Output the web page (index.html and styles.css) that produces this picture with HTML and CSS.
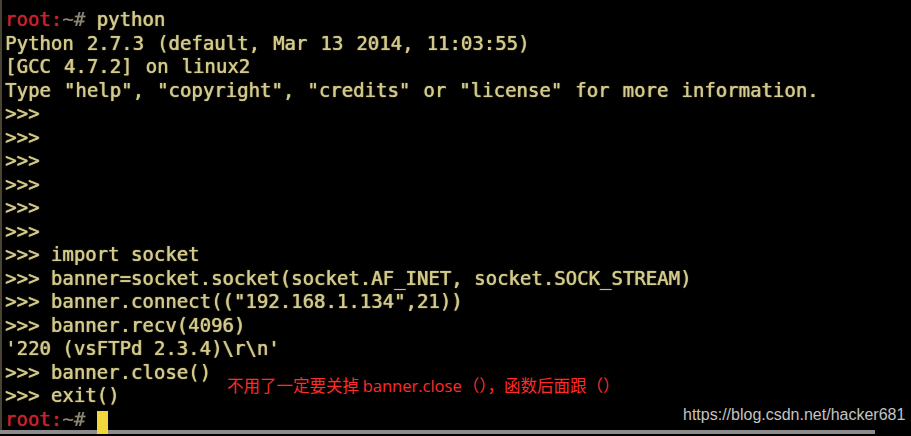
FILE: index.html
```html
<!DOCTYPE html>
<html lang="zh-CN">
<head>
<meta charset="utf-8">
<title>python socket</title>
<link rel="stylesheet" href="styles.css">
</head>
<body>
<div class="shot">
  <div class="term">
    <div class="line"><span class="root">root:</span><span class="dim">~#</span> python</div>
    <div class="line wide">Python 2.7.3 (default, Mar 13 2014, 11:03:55)</div>
    <div class="line wide">[GCC 4.7.2] on linux2</div>
    <div class="line wide">Type "help", "copyright", "credits" or "license" for more information.</div>
    <div class="line">&gt;&gt;&gt;</div>
    <div class="line">&gt;&gt;&gt;</div>
    <div class="line">&gt;&gt;&gt;</div>
    <div class="line">&gt;&gt;&gt;</div>
    <div class="line">&gt;&gt;&gt;</div>
    <div class="line">&gt;&gt;&gt;</div>
    <div class="line">&gt;&gt;&gt; import socket</div>
    <div class="line">&gt;&gt;&gt; banner=socket.socket(socket.AF_INET, socket.SOCK_STREAM)</div>
    <div class="line">&gt;&gt;&gt; banner.connect(("192.168.1.134",21))</div>
    <div class="line">&gt;&gt;&gt; banner.recv(4096)</div>
    <div class="line">'220 (vsFTPd 2.3.4)\r\n'</div>
    <div class="line">&gt;&gt;&gt; banner.close()</div>
    <div class="line">&gt;&gt;&gt; exit()</div>
    <div class="line"><span class="root">root:</span><span class="dim">~#</span> <span class="cursor"> </span></div>
  </div>
  <div class="scrollbar"></div>
  <div class="note">不用了一定要关掉 <span class="latin">banner.close</span>（），函数后面跟（）</div>
  <div class="mark">https://blog.csdn.net/hacker681</div>
</div>
</body>
</html>
```
FILE: styles.css
```css
html, body {
  margin: 0;
  padding: 0;
  background: #000;
}

.shot {
  position: relative;
  width: 911px;
  height: 436px;
  overflow: hidden;
  background: #000;
}

.term {
  height: 430px;
  box-sizing: border-box;
  padding: 8px 0 0 3px;
  border-left: 2px solid #4a4232;
  font-family: "DejaVu Sans Mono", "Liberation Mono", monospace;
  font-size: 19px;
  line-height: 23.5px;
  color: #d3ca8c;
  text-shadow: 0.6px 0 0 rgba(210, 200, 130, 0.8), 0 0 1.5px rgba(210, 200, 130, 0.6);
  filter: blur(0.45px);
}

.line {
  white-space: pre;
  height: 23.5px;
}

.wide {
  word-spacing: 1.6px;
}

.root {
  color: #c8232c;
  text-shadow: 0.6px 0 0 rgba(200, 35, 44, 0.8), 0 0 1.5px rgba(200, 35, 44, 0.6);
}

.dim {
  color: #8a8470;
  text-shadow: 0.6px 0 0 rgba(138, 132, 112, 0.8);
}

.cursor {
  display: inline-block;
  width: 11px;
  height: 23px;
  vertical-align: -3px;
  background: #f0d63c;
}

.scrollbar {
  width: 875px;
  height: 4px;
  background: #8c8c8c;
}

.note {
  position: absolute;
  left: 227px;
  top: 375px;
  font-family: "Noto Sans CJK SC", sans-serif;
  font-size: 16.5px;
  line-height: 20px;
  color: #ff2a2a;
  white-space: nowrap;
}

.latin {
  font-family: "Open Sans", "Noto Sans", sans-serif;
  font-size: 16.5px;
  margin-right: 1px;
}

.mark {
  position: absolute;
  left: 683px;
  top: 405px;
  font-family: "Liberation Sans", Arial, sans-serif;
  font-size: 16px;
  line-height: 20px;
  color: #c4c4c4;
  white-space: nowrap;
}
```
